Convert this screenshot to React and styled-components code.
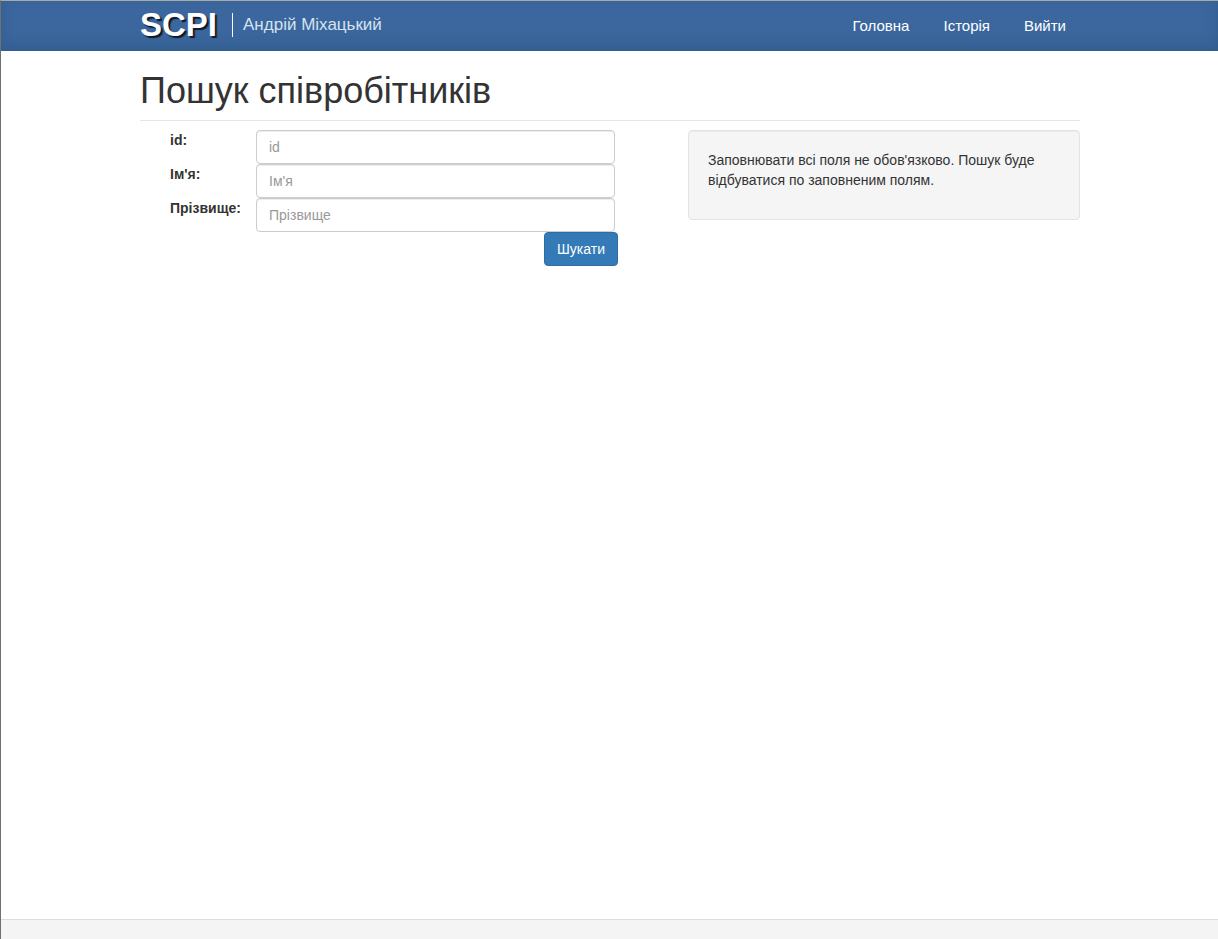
import React from "react";
import styled, { createGlobalStyle } from "styled-components";

const GlobalStyle = createGlobalStyle`
  *, *::before, *::after { box-sizing: border-box; }
  body {
    margin: 0;
    background: #fff;
    color: #333;
    font: 14px/20px "Liberation Sans", Arial, sans-serif;
  }
`;

const Page = styled.div`
  display: flex;
  flex-direction: column;
  min-height: 100vh;
  border-top: 1px solid #a9a9a9;
  border-left: 1px solid #707070;
`;

const Container = styled.div`
  width: 100%;
  max-width: 941px;
  margin: 0 auto;
  padding-left: 1px;
`;

const Header = styled.header`
  background: #3b679e;
  box-shadow: inset 0 -6px 14px rgba(30, 70, 110, 0.3);
`;

const HeaderRow = styled(Container)`
  display: flex;
  align-items: center;
  justify-content: space-between;
  height: 50px;
`;

const Brand = styled.div`
  display: flex;
  align-items: center;
  height: 50px;
  padding-bottom: 2px;
`;

const Logo = styled.a`
  color: #fff;
  font-size: 33px;
  font-weight: bold;
  line-height: 48px;
  text-decoration: none;
  text-shadow: 2px 2px 1px #111827;
`;

const UserName = styled.span`
  margin-left: 15px;
  padding-left: 10px;
  border-left: 1px solid #fff;
  color: #d3e3ef;
  font-size: 17px;
  line-height: 24px;
`;

const Nav = styled.nav`
  display: flex;
  gap: 34px;
  padding-right: 14px;
`;

const NavLink = styled.a`
  color: #fff;
  font-size: 15px;
  line-height: 20px;
  text-decoration: none;
`;

const Main = styled.main`
  flex: 1;
  padding-top: 20px;
`;

const Title = styled.h1`
  margin: 0 0 9px;
  padding-bottom: 9px;
  border-bottom: 1px solid #e5e5e5;
  font-size: 36px;
  font-weight: normal;
  line-height: 40px;
`;

const Columns = styled.div`
  display: flex;
  align-items: flex-start;
  justify-content: space-between;
`;

const Form = styled.form`
  display: flex;
  flex-direction: column;
  width: 478px;
  padding-left: 30px;
`;

const Field = styled.div`
  display: flex;
  align-items: flex-start;
  padding-right: 3px;
`;

const Label = styled.label`
  width: 86px;
  font-weight: bold;
`;

const Input = styled.input`
  flex: 1;
  min-width: 0;
  height: 34px;
  padding: 6px 12px;
  border: 1px solid #ccc;
  border-radius: 4px;
  background: #fff;
  box-shadow: inset 0 1px 1px rgba(0, 0, 0, 0.075);
  color: #555;
  font: inherit;
  &::placeholder { color: #999; opacity: 1; }
`;

const SubmitButton = styled.button`
  align-self: flex-end;
  height: 34px;
  padding: 6px 12px;
  border: 1px solid #2e6da4;
  border-radius: 4px;
  background: #337ab7;
  color: #fff;
  font: inherit;
  cursor: pointer;
`;

const Hint = styled.aside`
  width: 392px;
  padding: 19px;
  border: 1px solid #e3e3e3;
  border-radius: 4px;
  background: #f5f5f5;
  box-shadow: inset 0 1px 1px rgba(0, 0, 0, 0.05);
`;

const HintText = styled.p`
  margin: 0 0 10px;
`;

const Footer = styled.footer`
  height: 20px;
  border-top: 1px solid #ddd;
  background: #f4f4f4;
`;

const fields = [
  { id: "employee-id", label: "id:", placeholder: "id" },
  { id: "first-name", label: "Ім'я:", placeholder: "Ім'я" },
  { id: "last-name", label: "Прізвище:", placeholder: "Прізвище" },
];

export default function App() {
  return (
    <>
      <GlobalStyle />
      <Page>
        <Header>
          <HeaderRow>
            <Brand>
              <Logo href="#">SCPI</Logo>
              <UserName>Андрій Міхацький</UserName>
            </Brand>
            <Nav>
              <NavLink href="#">Головна</NavLink>
              <NavLink href="#">Історія</NavLink>
              <NavLink href="#">Вийти</NavLink>
            </Nav>
          </HeaderRow>
        </Header>
        <Main>
          <Container>
            <Title>Пошук співробітників</Title>
            <Columns>
              <Form onSubmit={(event) => event.preventDefault()}>
                {fields.map((field) => (
                  <Field key={field.id}>
                    <Label htmlFor={field.id}>{field.label}</Label>
                    <Input id={field.id} type="text" placeholder={field.placeholder} />
                  </Field>
                ))}
                <SubmitButton type="submit">Шукати</SubmitButton>
              </Form>
              <Hint>
                <HintText>
                  Заповнювати всі поля не обов'язково. Пошук буде відбуватися по заповненим полям.
                </HintText>
              </Hint>
            </Columns>
          </Container>
        </Main>
        <Footer />
      </Page>
    </>
  );
}
